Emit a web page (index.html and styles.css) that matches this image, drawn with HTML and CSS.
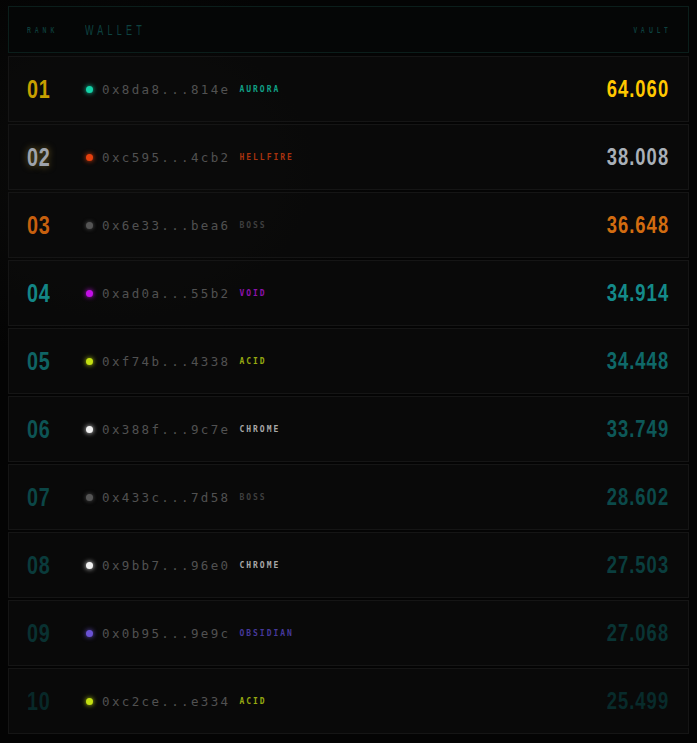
FILE: index.html
```html
<!DOCTYPE html>
<html>
<head>
<meta charset="utf-8">
<link rel="stylesheet" href="styles.css">
</head>
<body>
<div class="board">
  <div class="head">
    <span class="hcell"><span class="h-rank">RANK</span></span>
    <span class="hcell"><span class="h-wallet">WALLET</span></span>
    <span class="hcell end"><span class="h-vault">VAULT</span></span>
  </div>
  <div class="row r1"><span class="rank">01</span><span class="wallet"><i class="dot aurora"></i><span class="addr">0x8da8...814e</span><span class="tag aurora">AURORA</span></span><span class="val">64.060</span></div>
  <div class="row r2"><span class="rank">02</span><span class="wallet"><i class="dot hellfire"></i><span class="addr">0xc595...4cb2</span><span class="tag hellfire">HELLFIRE</span></span><span class="val">38.008</span></div>
  <div class="row r3"><span class="rank">03</span><span class="wallet"><i class="dot boss"></i><span class="addr">0x6e33...bea6</span><span class="tag boss">BOSS</span></span><span class="val">36.648</span></div>
  <div class="row r4"><span class="rank">04</span><span class="wallet"><i class="dot void"></i><span class="addr">0xad0a...55b2</span><span class="tag void">VOID</span></span><span class="val">34.914</span></div>
  <div class="row r5"><span class="rank">05</span><span class="wallet"><i class="dot acid"></i><span class="addr">0xf74b...4338</span><span class="tag acid">ACID</span></span><span class="val">34.448</span></div>
  <div class="row r6"><span class="rank">06</span><span class="wallet"><i class="dot chrome"></i><span class="addr">0x388f...9c7e</span><span class="tag chrome">CHROME</span></span><span class="val">33.749</span></div>
  <div class="row r7"><span class="rank">07</span><span class="wallet"><i class="dot boss"></i><span class="addr">0x433c...7d58</span><span class="tag boss">BOSS</span></span><span class="val">28.602</span></div>
  <div class="row r8"><span class="rank">08</span><span class="wallet"><i class="dot chrome"></i><span class="addr">0x9bb7...96e0</span><span class="tag chrome">CHROME</span></span><span class="val">27.503</span></div>
  <div class="row r9"><span class="rank">09</span><span class="wallet"><i class="dot obsidian"></i><span class="addr">0x0b95...9e9c</span><span class="tag obsidian">OBSIDIAN</span></span><span class="val">27.068</span></div>
  <div class="row r10"><span class="rank">10</span><span class="wallet"><i class="dot acid"></i><span class="addr">0xc2ce...e334</span><span class="tag acid">ACID</span></span><span class="val">25.499</span></div>
</div>
</body>
</html>
```

FILE: styles.css
```css
html, body {
  margin: 0;
  background: #040404;
}
body {
  width: 697px;
  height: 743px;
  overflow: hidden;
  background: radial-gradient(ellipse 260px 200px at 120px 170px, #0c0c0b 0%, #040404 100%);
}
.board {
  padding: 6px 8px;
  display: flex;
  flex-direction: column;
  gap: 2px;
}
.head {
  height: 45px;
  border: 1px solid #0b1e1b;
  display: grid;
  grid-template-columns: 58px 1fr auto;
  align-items: center;
  padding: 0 20px 0 18px;
  margin-bottom: 1px;
  background: #050606;
  font-family: "Liberation Sans", sans-serif;
}
.hcell {
  display: flex;
}
.hcell.end {
  justify-content: flex-end;
}
.h-rank {
  display: inline-block;
  font-size: 9px;
  font-weight: bold;
  letter-spacing: 6.5px;
  color: #0d3e3c;
  transform: scaleX(0.6);
  transform-origin: left center;
  padding-top: 1px;
}
.h-wallet {
  display: inline-block;
  font-size: 15px;
  letter-spacing: 7px;
  color: #0d4240;
  transform: scaleX(0.6);
  transform-origin: left center;
}
.h-vault {
  display: inline-block;
  font-size: 9px;
  font-weight: bold;
  letter-spacing: 7px;
  color: #0d4240;
  transform: scaleX(0.6);
  transform-origin: right center;
  margin-right: -4px;
}
.row {
  height: 64px;
  border: 1px solid #151515;
  background: rgba(10, 10, 10, 0.85);
  display: grid;
  grid-template-columns: 58px 1fr auto;
  align-items: center;
  padding: 0 20px 0 18px;
}
.rank {
  justify-self: start;
  display: inline-block;
  font-family: "Liberation Sans", sans-serif;
  font-weight: bold;
  font-size: 26px;
  letter-spacing: 1px;
  line-height: 1;
  transform: scaleX(0.76);
  transform-origin: left center;
}
.val {
  justify-self: end;
  display: inline-block;
  font-family: "Liberation Sans", sans-serif;
  font-weight: bold;
  font-size: 23px;
  letter-spacing: 1.3px;
  line-height: 1;
  transform: scaleX(0.8);
  transform-origin: right center;
  margin-right: -1px;
}
.wallet {
  display: flex;
  align-items: center;
}
.dot {
  width: 7px;
  height: 7px;
  border-radius: 50%;
  margin-left: 1px;
  margin-right: 9px;
  display: inline-block;
}
.addr {
  font-family: "DejaVu Sans Mono", monospace;
  font-size: 12.5px;
  letter-spacing: 2.35px;
  color: #515151;
  margin-right: 9px;
}
.tag {
  font-family: "DejaVu Sans Mono", monospace;
  font-weight: bold;
  font-size: 8px;
  letter-spacing: 2px;
}
.dot.aurora { background: #14d2a8; box-shadow: 0 0 5px #14d2a8; }
.tag.aurora { color: #10a086; }
.dot.hellfire { background: #e5400e; box-shadow: 0 0 5px #e5400e; }
.tag.hellfire { color: #a8320e; }
.dot.boss { background: #555; box-shadow: 0 0 4px #555; }
.tag.boss { color: #3e3e3e; }
.dot.void { background: #c40fe8; box-shadow: 0 0 5px #c40fe8; }
.tag.void { color: #8c12ac; }
.dot.acid { background: #c4e012; box-shadow: 0 0 5px #c4e012; }
.tag.acid { color: #96aa10; }
.dot.chrome { background: #f0f0f0; box-shadow: 0 0 5px #f0f0f0; }
.tag.chrome { color: #a8a8a8; }
.dot.obsidian { background: #6a52d4; box-shadow: 0 0 5px #6a52d4; }
.tag.obsidian { color: #45389a; }

.r1 .rank { color: #c8a000; }
.r1 .val { color: #ffc800; }
.r2 .rank { color: #9ea3ab; text-shadow: 0 0 8px rgba(200, 170, 60, 0.55); }
.r2 .val { color: #a9b0b8; }
.r3 .rank { color: #c7600e; }
.r3 .val { color: #d26c10; }
.r4 .rank { color: #138686; }
.r4 .val { color: #148a8a; }
.r5 .rank { color: #0f6464; }
.r5 .val { color: #0f6868; }
.r6 .rank { color: #0d5454; }
.r6 .val { color: #0d5858; }
.r7 .rank { color: #0b4646; }
.r7 .val { color: #0b4a4a; }
.r8 .rank { color: #0a3b3b; }
.r8 .val { color: #0a3e3e; }
.r9 .rank { color: #093131; }
.r9 .val { color: #093434; }
.r10 .rank { color: #082828; }
.r10 .val { color: #082b2b; }
```
